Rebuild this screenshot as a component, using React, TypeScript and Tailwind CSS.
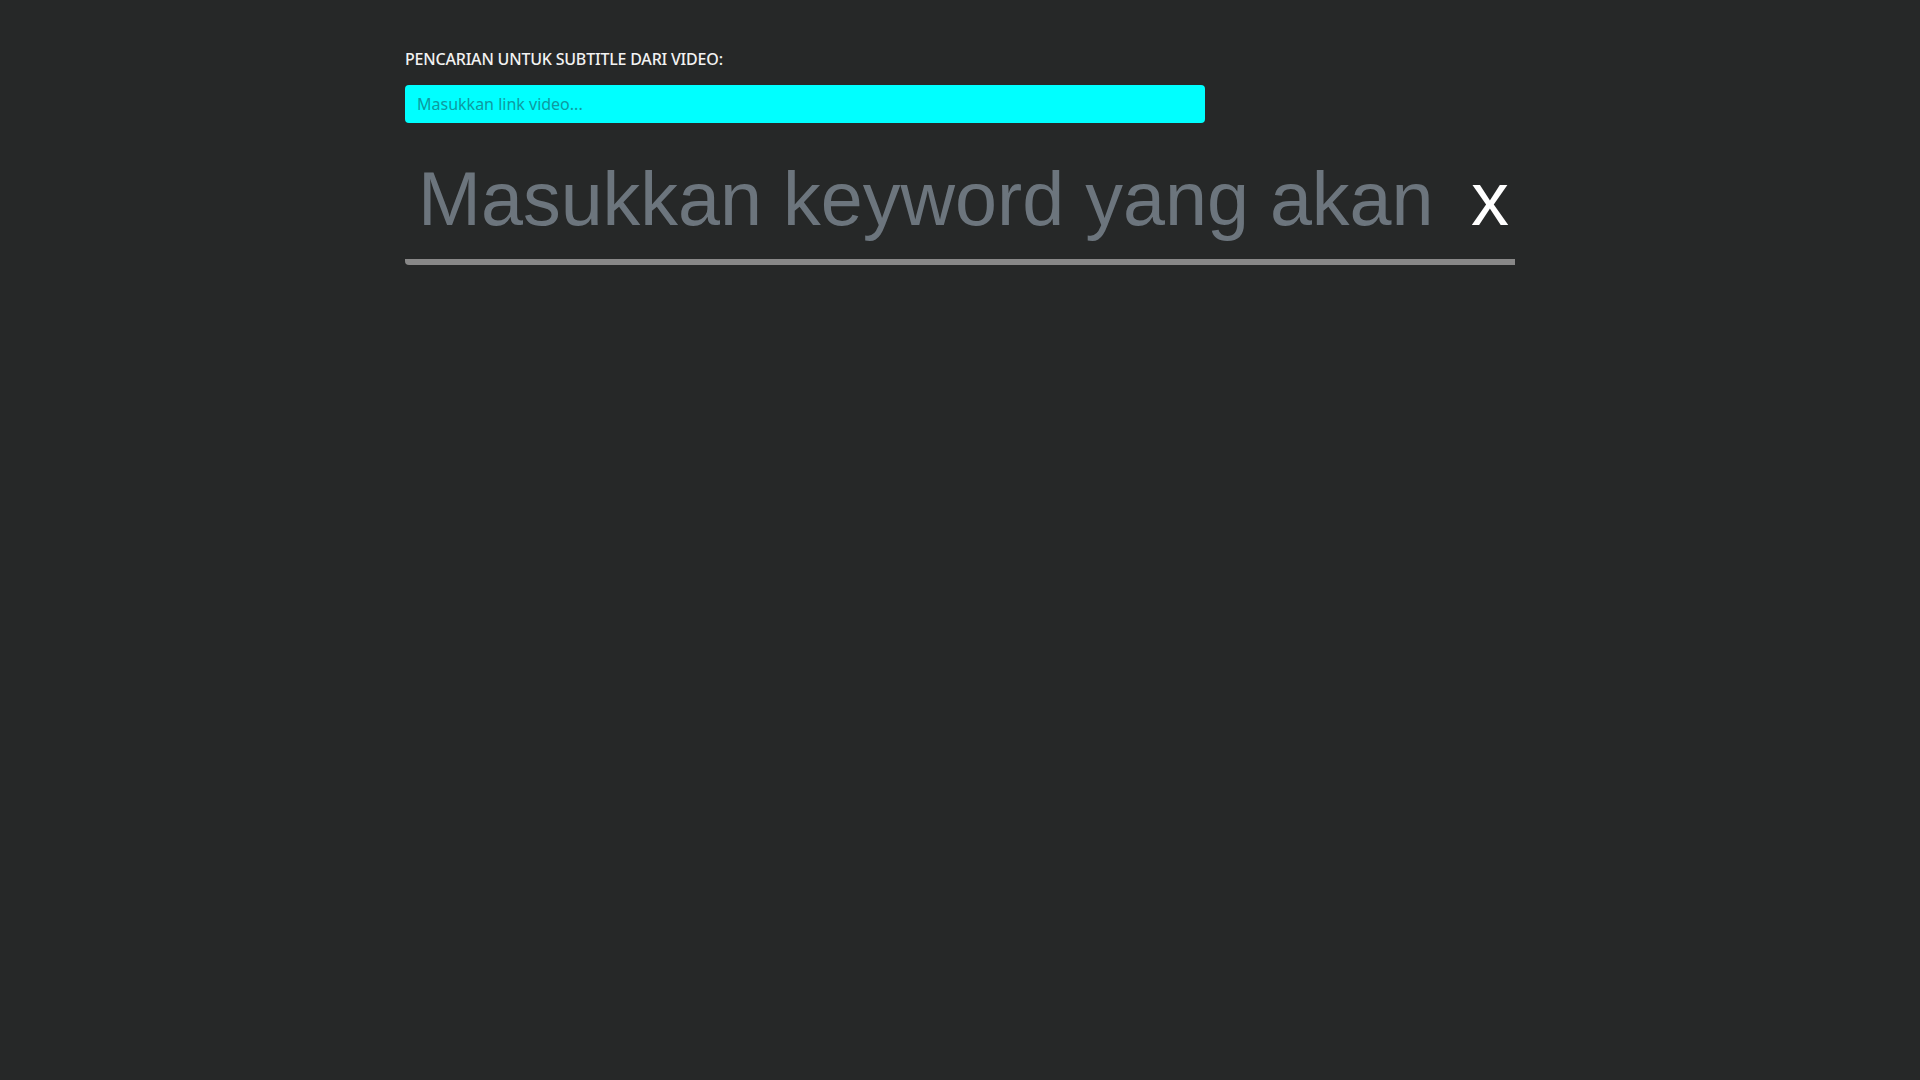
import React from "react";

export default function App() {
  return (
    <div className="min-h-screen w-full bg-[#262828]">
      <div className="mx-auto w-[1110px] pt-[47px]">
        <label className="block text-[16px] font-medium leading-[24px] tracking-[-0.2px] text-[#f2f2f2] [font-family:'Noto_Sans',sans-serif]">
          PENCARIAN UNTUK SUBTITLE DARI VIDEO:
        </label>
        <input
          type="text"
          className="mt-[14px] block h-[38px] w-[800px] rounded-[4px] bg-[#00ffff] px-3 text-[16px] text-[#0e6f73] outline-none placeholder:text-[#0e9aa0] [font-family:'Noto_Sans',sans-serif]"
          placeholder="Masukkan link video..."
        />
        <div className="mt-[33px] flex items-start rounded-bl-[4px] border-b-[6px] border-[#888888] pb-[17px] [font-family:'Liberation_Sans',Arial,sans-serif]">
          <input
            type="text"
            className="h-[86px] min-w-0 flex-1 bg-transparent pl-[13px] pr-4 text-[75.5px] leading-[86px] text-white outline-none placeholder:text-[#6c757d]"
            placeholder="Masukkan keyword yang akan dicari..."
          />
          <button className="h-[86px] pl-2 pr-[6px] text-[76px] leading-[86px] text-white">
            x
          </button>
        </div>
      </div>
    </div>
  );
}
